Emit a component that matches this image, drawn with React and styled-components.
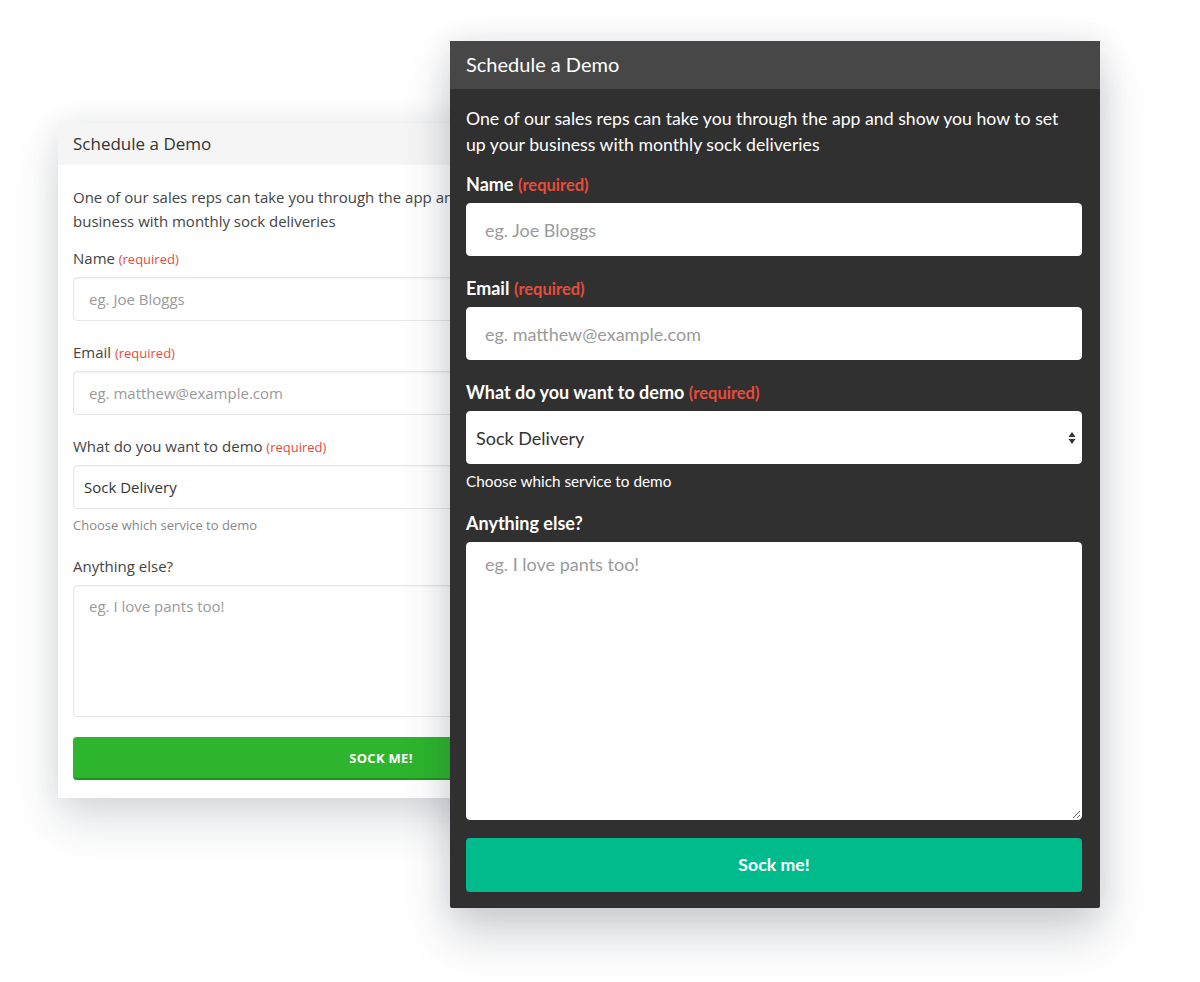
import styled, { createGlobalStyle, ThemeProvider } from "styled-components";

const GlobalStyle = createGlobalStyle`
  html, body {
    margin: 0;
    padding: 0;
    background: #ffffff;
  }
  * {
    box-sizing: border-box;
  }
`;

const lightTheme = {
  font: `"Open Sans", "Liberation Sans", sans-serif`,
  cardBg: "#ffffff",
  headerBg: "#f5f5f5",
  headerColor: "#333333",
  headerHeight: 42,
  headerSize: 17,
  padLeft: 15,
  padRight: 15,
  padTop: 20,
  padBottom: 18,
  text: "#444444",
  descSize: 15,
  descLine: 24,
  labelSize: 15,
  labelWeight: 400,
  labelLine: 20,
  labelGap: 9,
  requiredSize: 13,
  requiredWeight: 400,
  inputHeight: 44,
  inputPadX: 15,
  inputSize: 15,
  inputBorder: "1px solid #e6e6e6",
  inputShadow: "inset 0 1px 2px rgba(0,0,0,0.05)",
  selectPadX: 10,
  helperColor: "#888888",
  helperSize: 13,
  helperGap: 6,
  textareaHeight: 132,
  groupGap: 21,
  buttonBg: "#2db52d",
  buttonEdge: "#229322",
  buttonHeight: 43,
  buttonSize: 13,
  buttonTransform: "uppercase",
  buttonGap: 20,
};

const darkTheme = {
  font: `Lato, "Liberation Sans", sans-serif`,
  cardBg: "#303030",
  headerBg: "#474747",
  headerColor: "#ffffff",
  headerHeight: 48,
  headerSize: 20,
  padLeft: 16,
  padRight: 18,
  padTop: 17,
  padBottom: 16,
  text: "#ffffff",
  descSize: 17.7,
  descLine: 26,
  labelSize: 18,
  labelWeight: 700,
  labelLine: 22,
  labelGap: 8,
  requiredSize: 16.5,
  requiredWeight: 700,
  inputHeight: 53,
  inputPadX: 18,
  inputSize: 18,
  inputBorder: "1px solid #ffffff",
  inputShadow: "none",
  selectPadX: 9,
  helperColor: "#ffffff",
  helperSize: 15.3,
  helperGap: 7,
  textareaHeight: 278,
  groupGap: 21,
  buttonBg: "#00bc8c",
  buttonEdge: "#00bc8c",
  buttonHeight: 54,
  buttonSize: 17.7,
  buttonTransform: "none",
  buttonGap: 18,
};

const Stage = styled.div`
  position: relative;
  width: 1200px;
  height: 982px;
  overflow: hidden;
  padding: 123px 0 0 58px;
`;

const Card = styled.div`
  width: ${(p) => p.width}px;
  background: ${(p) => p.theme.cardBg};
  font-family: ${(p) => p.theme.font};
  color: ${(p) => p.theme.text};
  box-shadow: 0 22px 44px rgba(40, 50, 70, 0.16), 0 0 28px rgba(40, 50, 70, 0.08);
`;

const FrontCard = styled(Card)`
  position: absolute;
  left: 450px;
  top: 41px;
  border-radius: 2px;
  box-shadow: 0 26px 48px rgba(40, 50, 70, 0.22), 0 0 30px rgba(40, 50, 70, 0.1);
`;

const Header = styled.div`
  height: ${(p) => p.theme.headerHeight}px;
  display: flex;
  align-items: center;
  padding-left: ${(p) => p.theme.padLeft}px;
  padding-bottom: 2px;
  background: ${(p) => p.theme.headerBg};
  color: ${(p) => p.theme.headerColor};
  font-size: ${(p) => p.theme.headerSize}px;
`;

const Body = styled.form`
  display: flex;
  flex-direction: column;
  padding: ${(p) => p.theme.padTop}px ${(p) => p.theme.padRight}px
    ${(p) => p.theme.padBottom}px ${(p) => p.theme.padLeft}px;
`;

const Intro = styled.p`
  margin: 0 0 15px;
  font-size: ${(p) => p.theme.descSize}px;
  line-height: ${(p) => p.theme.descLine}px;
`;

const Group = styled.div`
  display: flex;
  flex-direction: column;
  margin-bottom: ${(p) => p.theme.groupGap}px;
`;

const Label = styled.label`
  display: flex;
  align-items: baseline;
  gap: 0.25em;
  height: ${(p) => p.theme.labelLine}px;
  font-size: ${(p) => p.theme.labelSize}px;
  font-weight: ${(p) => p.theme.labelWeight};
  line-height: ${(p) => p.theme.labelLine}px;
  margin-bottom: ${(p) => p.theme.labelGap}px;
`;

const Required = styled.span`
  color: #e74c3c;
  font-size: ${(p) => p.theme.requiredSize}px;
  font-weight: ${(p) => p.theme.requiredWeight};
`;

const fieldBase = (p) => `
  width: 100%;
  border: ${p.theme.inputBorder};
  border-radius: 4px;
  background: #ffffff;
  box-shadow: ${p.theme.inputShadow};
  font-family: ${p.theme.font};
  font-size: ${p.theme.inputSize}px;
  color: #333333;
  outline: none;
`;

const Input = styled.input`
  ${fieldBase}
  height: ${(p) => p.theme.inputHeight}px;
  padding: 0 ${(p) => p.theme.inputPadX}px;
  &::placeholder {
    color: #9a9a9a;
  }
`;

const SelectWrap = styled.div`
  position: relative;
  height: ${(p) => p.theme.inputHeight}px;
`;

const Select = styled.select`
  ${fieldBase}
  appearance: none;
  display: block;
  height: ${(p) => p.theme.inputHeight}px;
  padding: 0 ${(p) => p.theme.selectPadX}px;
`;

const Arrows = styled.svg`
  position: absolute;
  right: 4px;
  top: 50%;
  transform: translateY(-50%);
  pointer-events: none;
`;

const Helper = styled.div`
  margin-top: ${(p) => p.theme.helperGap}px;
  font-size: ${(p) => p.theme.helperSize}px;
  line-height: 20px;
  height: 20px;
  color: ${(p) => p.theme.helperColor};
`;

const TextArea = styled.textarea`
  ${fieldBase}
  height: ${(p) => p.theme.textareaHeight}px;
  padding: 10px ${(p) => p.theme.inputPadX}px;
  resize: vertical;
  display: block;
  &::placeholder {
    color: #9a9a9a;
  }
`;

const LastGroup = styled(Group)`
  margin-bottom: ${(p) => p.theme.buttonGap}px;
`;

const Button = styled.button`
  height: ${(p) => p.theme.buttonHeight}px;
  border: none;
  border-bottom: 2px solid ${(p) => p.theme.buttonEdge};
  border-radius: 4px;
  background: ${(p) => p.theme.buttonBg};
  color: #ffffff;
  font-family: ${(p) => p.theme.font};
  font-size: ${(p) => p.theme.buttonSize}px;
  font-weight: 700;
  text-transform: ${(p) => p.theme.buttonTransform};
  letter-spacing: ${(p) => (p.theme.buttonTransform === "uppercase" ? "0.3px" : "0")};
  cursor: pointer;
`;

function DemoForm({ theme, width, as }) {
  const Wrapper = as === "front" ? FrontCard : Card;
  return (
    <ThemeProvider theme={theme}>
      <Wrapper width={width}>
        <Header>Schedule a Demo</Header>
        <Body onSubmit={(e) => e.preventDefault()}>
          <Intro>
            One of our sales reps can take you through the app and show you how to set
            up your business with monthly sock deliveries
          </Intro>
          <Group>
            <Label>
              <span>Name</span>
              <Required>(required)</Required>
            </Label>
            <Input placeholder="eg. Joe Bloggs" />
          </Group>
          <Group>
            <Label>
              <span>Email</span>
              <Required>(required)</Required>
            </Label>
            <Input placeholder="eg. matthew@example.com" />
          </Group>
          <Group>
            <Label>
              <span>What do you want to demo</span>
              <Required>(required)</Required>
            </Label>
            <SelectWrap>
              <Select defaultValue="sock">
                <option value="sock">Sock Delivery</option>
              </Select>
              <Arrows width="12" height="16" viewBox="0 0 12 16">
                <path d="M6 2 L9.5 7 H2.5 Z M6 14 L9.5 9 H2.5 Z" fill="#333" />
              </Arrows>
            </SelectWrap>
            <Helper>Choose which service to demo</Helper>
          </Group>
          <LastGroup>
            <Label>Anything else?</Label>
            <TextArea placeholder="eg. I love pants too!" />
          </LastGroup>
          <Button type="submit">Sock me!</Button>
        </Body>
      </Wrapper>
    </ThemeProvider>
  );
}

export default function App() {
  return (
    <>
      <GlobalStyle />
      <Stage>
        <DemoForm theme={lightTheme} width={646} />
        <DemoForm theme={darkTheme} width={650} as="front" />
      </Stage>
    </>
  );
}
